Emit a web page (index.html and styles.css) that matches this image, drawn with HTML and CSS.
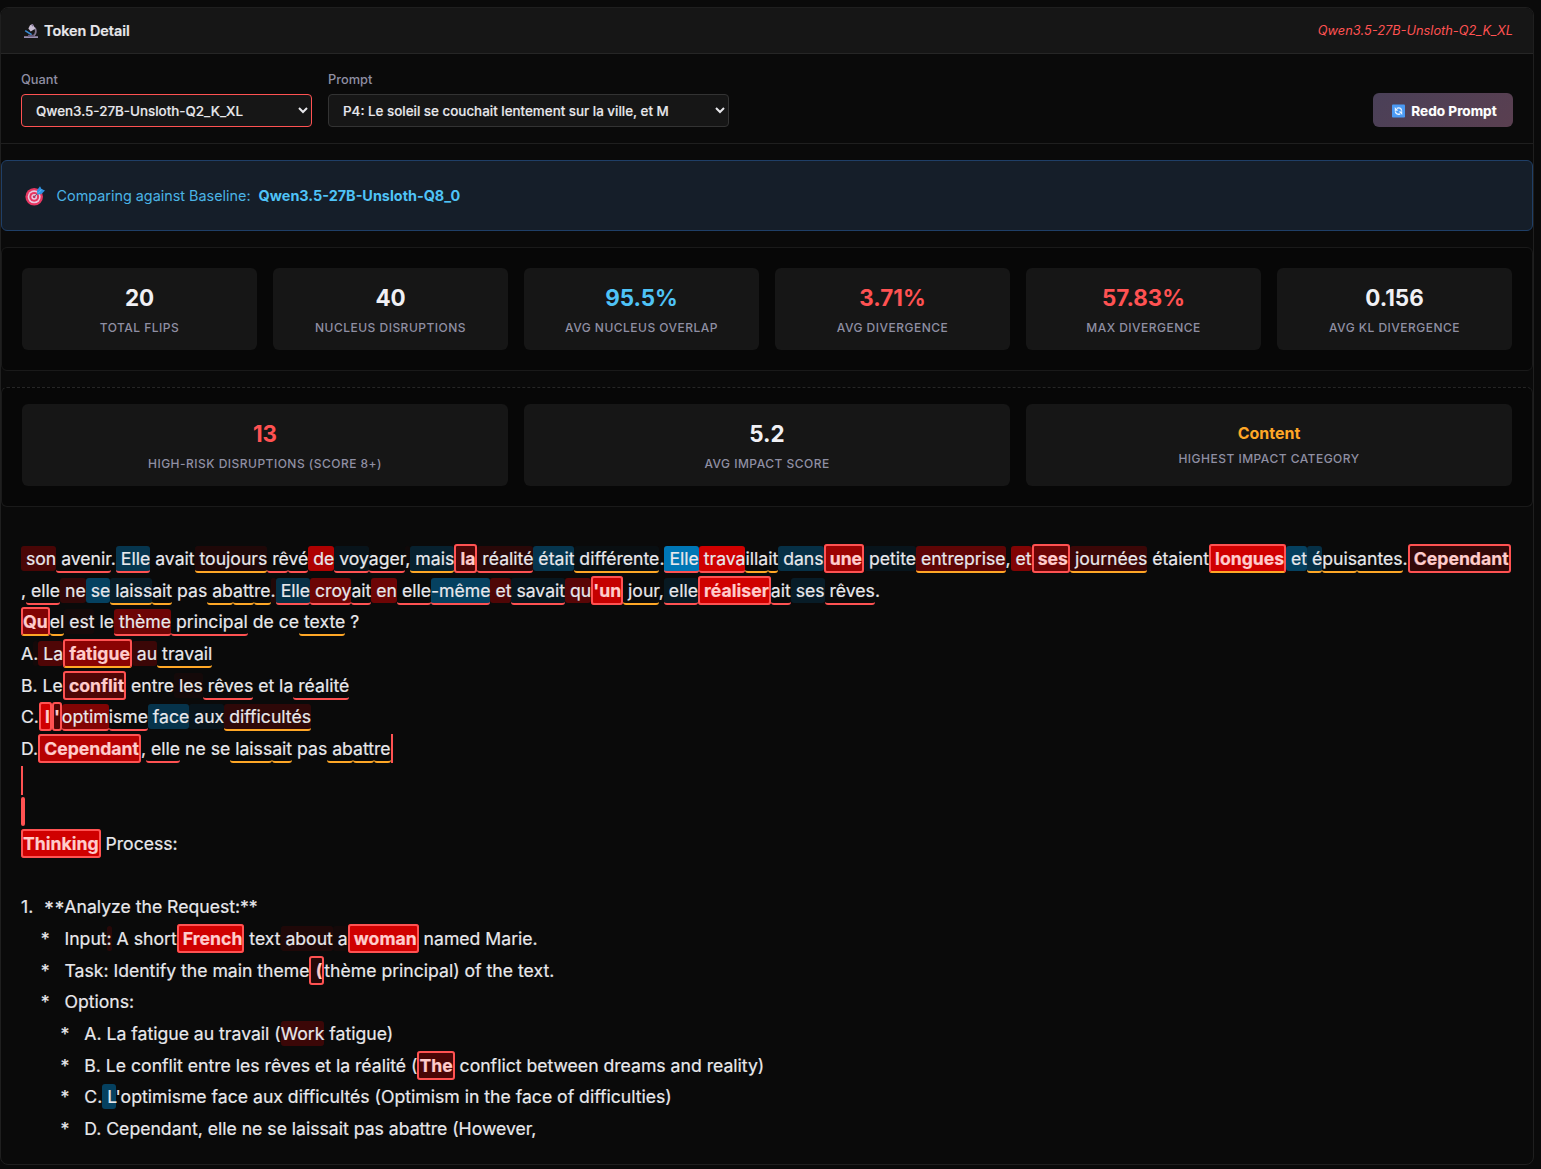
FILE: index.html
```html
<!DOCTYPE html>
<html lang="en">
<head>
<meta charset="utf-8">
<title>Token Detail</title>
<link rel="stylesheet" href="styles.css">
</head>
<body>
<main class="panel">
<header class="panel-header">
<h1 class="title"><svg class="icon-scope" viewBox="0 0 16 16"><path d="M1 13.3h14v1.7H1z" fill="#9a8fb0"/><path d="M10.5 4.2c3 1.3 3.600 6.300-.8 9.200" fill="none" stroke="#81758f" stroke-width="1.700"/><path d="M7 2.300 9.600 1l2.600 4.700-4.500 2.800-2.300-3z" fill="#c9bed4"/><path d="m8.300 1.800 1.600-.9 1 1.800-1.700.9z" fill="#817295"/><path d="m2.200 7.600 6.500 4.100" stroke="#398bd3" stroke-width="1.600"/><path d="M5 11.700h6v1.700H5z" fill="#665978"/></svg>Token Detail</h1>
<span class="model">Qwen3.5-27B-Unsloth-Q2_K_XL</span>
</header>
<section class="controls">
<label class="field">Quant<select class="select select-quant"><option>Qwen3.5-27B-Unsloth-Q2_K_XL</option></select></label>
<label class="field">Prompt<select class="select select-prompt"><option>P4: Le soleil se couchait lentement sur la ville, et M</option></select></label>
<button class="redo"><svg class="icon-redo" viewBox="0 0 14 14"><rect width="14" height="14" rx="1" fill="#4b9af3"/><path d="M5.200 4.100c2.400-1.300 5 .1 5.200 2.600M8.800 10c-2.400 1.300-5-.1-5.200-2.600" fill="none" stroke="#e8f3ff" stroke-width="1.500"/><path d="M3 2.800v4.100l3.800-.4zM11 11.300V7.200l-3.800.4z" fill="#e8f3ff"/></svg><span class="redo-text">Redo Prompt</span></button>
</section>
<section class="baseline">
<svg class="icon-target" viewBox="0 0 20 20"><circle cx="9.200" cy="10.800" r="8.800" fill="#e73762"/><circle cx="9.200" cy="10.800" r="6.500" fill="#eac8df"/><circle cx="9.200" cy="10.800" r="4.900" fill="#e73762"/><circle cx="9.200" cy="10.800" r="2.900" fill="#eac8df"/><circle cx="9.200" cy="10.800" r="1.400" fill="#c52c59"/><path d="m9.500 10.500 6-6" stroke="#68647e" stroke-width="1"/><path d="m12 4.200 3-4L16.500 3l3.500 1.500-3.800 3.700-3.900.3z" fill="#2d91e3"/><path d="m12.800 7.500 4-4" stroke="#65bef5" stroke-width="1"/></svg>
<span>Comparing against Baseline:</span><strong>Qwen3.5-27B-Unsloth-Q8_0</strong>
</section>
<section class="stats">
<div class="card"><div class="value">20</div><div class="label">Total Flips</div></div>
<div class="card"><div class="value">40</div><div class="label">Nucleus Disruptions</div></div>
<div class="card"><div class="value blue">95.5%</div><div class="label">Avg Nucleus Overlap</div></div>
<div class="card"><div class="value red">3.71%</div><div class="label">Avg Divergence</div></div>
<div class="card"><div class="value red">57.83%</div><div class="label">Max Divergence</div></div>
<div class="card"><div class="value">0.156</div><div class="label">Avg KL Divergence</div></div>
</section>
<section class="stats impact">
<div class="card"><div class="value red">13</div><div class="label">High-Risk Disruptions (Score 8+)</div></div>
<div class="card"><div class="value">5.2</div><div class="label">Avg Impact Score</div></div>
<div class="card"><div class="value category">Content</div><div class="label">Highest Impact Category</div></div>
</section>
<section class="tokens">
<div class="line"><span class="t r" style="--a:.32"> son</span><span class="t ur"> avenir</span>.<span class="t b ur" style="--a:.4"> Elle</span> avait<span class="t r uy" style="--a:.11"> toujours</span><span class="t ur"> rê</span><span class="t ur">vé</span><span class="t r" style="--a:.83"> de</span><span class="t b ur" style="--a:.1"> voy</span><span class="t ur">ager</span><span class="t r" style="--a:.03">,</span><span class="t b uy" style="--a:.22"> mais</span><span class="t r flip" style="--a:.32"> la</span><span class="t r ur" style="--a:.16"> réalité</span><span class="t b" style="--a:.4"> était</span><span class="t b uy" style="--a:.05"> différente</span>.<span class="t b ur" style="--a:1"> Elle</span><span class="t r ur" style="--a:1"> trava</span><span class="t uy">illa</span><span class="t uy">it</span><span class="t b" style="--a:.35"> dans</span><span class="t r flip" style="--a:.74"> une</span><span class="t b" style="--a:.1"> petite</span><span class="t r uy" style="--a:.43"> entreprise</span>,<span class="t r" style="--a:.6"> et</span><span class="t r flip" style="--a:.5"> ses</span><span class="t r uy" style="--a:.25"> journées</span> étaient<span class="t r flip uy" style="--a:1"> longues</span><span class="t b" style="--a:.5"> et</span><span class="t b uy" style="--a:.35"> é</span><span class="t uy">puis</span><span class="t uy">antes</span>.<span class="t r flip" style="--a:.2"> Cependant</span></div>
<div class="line">,<span class="t ur"> elle</span><span class="t r" style="--a:.2"> ne</span><span class="t b" style="--a:.5"> se</span><span class="t b uy" style="--a:.17"> laiss</span><span class="t uy">ait</span> pas<span class="t uy"> ab</span><span class="t uy">att</span><span class="t uy">re</span><span class="t r" style="--a:.12">.</span><span class="t b ur" style="--a:.35"> Elle</span><span class="t r ur" style="--a:.5"> croy</span><span class="t ur">ait</span><span class="t r" style="--a:.5"> en</span><span class="t ur"> elle</span><span class="t b ur" style="--a:.5">-même</span><span class="t r" style="--a:.35"> et</span><span class="t b ur" style="--a:.12"> savait</span><span class="t r" style="--a:.4"> qu</span><span class="t r flip" style="--a:.95">'un</span><span class="t uy"> jour</span>,<span class="t b ur" style="--a:.14"> elle</span><span class="t r flip" style="--a:1"> réaliser</span><span class="t ur">ait</span><span class="t b" style="--a:.17"> ses</span><span class="t ur"> rêves</span>.</div>
<div class="line"><span class="t r flip uy" style="--a:.6">Qu</span><span class="t uy">el</span><span class="t r" style="--a:.05"> est</span> le<span class="t r ur" style="--a:.5"> thème</span><span class="t ur"> principal</span> de ce<span class="t uy"> texte</span> ?</div>
<div class="line">A<span class="t r" style="--a:.05">.</span><span class="t r" style="--a:.35"> La</span><span class="t r flip uy" style="--a:.65"> fatigue</span><span class="t r" style="--a:.25"> au</span><span class="t uy"> travail</span></div>
<div class="line">B. Le<span class="t r flip" style="--a:.35"> conflit</span> entre<span class="t r" style="--a:.05"> les</span><span class="t ur"> rêves</span> et la<span class="t ur"> réalité</span></div>
<div class="line">C.<span class="t r flip" style="--a:1"> l</span><span class="t r flip" style="--a:.35">'</span><span class="t r ur" style="--a:.6">optim</span><span class="t ur">isme</span><span class="t b" style="--a:.38"> face</span><span class="t b" style="--a:.1"> aux</span><span class="t r uy" style="--a:.18"> difficultés</span></div>
<div class="line">D.<span class="t r flip" style="--a:.87"> Cependant</span>,<span class="t ur"> elle</span> ne se<span class="t uy"> laiss</span><span class="t uy">ait</span> pas<span class="t uy"> ab</span><span class="t uy">att</span><span class="t uy">re</span><span class="edge"></span></div>
<div class="line"><span class="edge"></span></div>
<div class="line"><span class="t flip"></span></div>
<div class="line"><span class="t r flip" style="--a:1">Thinking</span> Process:</div>
<div class="line"> </div>
<div class="line">1.  <span class="stars">**</span>Analyze the Request:**</div>
<div class="line">    *   Input<span class="t r" style="--a:.15">:</span> A short<span class="t r flip" style="--a:1"> French</span> text<span class="t r" style="--a:.11"> about</span><span class="t r" style="--a:.05"> a</span><span class="t r flip" style="--a:1"> woman</span> named Marie.</div>
<div class="line">    *   Task: Identify the main theme<span class="t r flip" style="--a:.15"> (</span>thème principal) of the text.</div>
<div class="line">    *   Options:</div>
<div class="line">        *   A. La fatigue au travail (<span class="t r" style="--a:.25">Work</span> fatigue)</div>
<div class="line">        *   B. Le conflit entre les rêves et la réalité (<span class="t r flip" style="--a:.32">The</span> conflict between dreams and reality)</div>
<div class="line">        *   C.<span class="t b" style="--a:.5"> L</span>'optimisme face aux difficultés (Optimism in the face of difficulties)</div>
<div class="line">        *   D. Cependant, elle ne se laissait pas abattre (However,</div>
</section>
</main>
</body>
</html>
```
FILE: styles.css
```css
* { box-sizing: border-box; }
html, body { height: 100%; }
body {
  margin: 0;
  padding: 7px 7px 0 0;
  background: #0a0a0a;
  color: #e8e8ec;
  font-family: Inter, "Liberation Sans", sans-serif;
  overflow: hidden;
}
.panel {
  height: 1158px;
  border: 1px solid #1f1f1f;
  border-radius: 8px;
  background: #0a0a0a;
  overflow: hidden;
}
.panel-header {
  display: flex;
  align-items: center;
  justify-content: space-between;
  height: 46px;
  padding: 0 20px;
  background: #161616;
  border-bottom: 1px solid #262626;
}
.title {
  display: flex;
  align-items: center;
  gap: 5px;
  margin: 0;
  padding-left: 2px;
  font-size: 14.4px;
  font-weight: 600;
  -webkit-text-stroke: .2px;
}
.icon-scope { width: 16px; height: 16px; }
.model { color: #ff5252; font-size: 12.8px; font-style: italic; }
.controls {
  display: flex;
  align-items: flex-end;
  gap: 16px;
  height: 90px;
  padding: 16px 20px;
  border-bottom: 1px solid #1f1f1f;
}
.field {
  display: flex;
  flex-direction: column;
  gap: 7px;
  color: #8f8fa3;
  font-size: 12.8px;
  font-weight: 500;
}
.select {
  height: 33px;
  padding: 1px 0 0 10px;
  border: 1px solid #333;
  border-radius: 4px;
  background: #161616;
  color: #e8e8ec;
  font: 500 13.4px Inter, "Liberation Sans", sans-serif;
  -webkit-text-stroke: .15px;
}
.select-quant { width: 291px; border-color: #ff5252; }
.select-prompt { width: 401px; }
.redo {
  display: flex;
  align-items: center;
  justify-content: center;
  gap: 6px;
  width: 140px;
  height: 34px;
  margin-left: auto;
  padding: 1px 0 0 3px;
  border: 0;
  border-radius: 6px;
  background: linear-gradient(135deg, #4a4058, #5a3f50);
  color: #fff;
  font: 700 13.6px Inter, "Liberation Sans", sans-serif;
}
.redo-text { padding-top: 1px; -webkit-text-stroke: .15px; }
.icon-redo { width: 13px; height: 14px; }
.baseline {
  display: flex;
  align-items: center;
  height: 71px;
  margin-top: 16px;
  padding: 0 23px;
  border: 1px solid #1f3f67;
  border-radius: 6px;
  background: #151e29;
  color: #4ab3e5;
  font-size: 14.4px;
}
.baseline strong { margin-left: 8px; color: #4fc3f7; font-weight: 700; }
.icon-target { width: 20px; height: 20px; margin-right: 11.5px; }
.stats {
  display: grid;
  grid-template-columns: repeat(6, 1fr);
  gap: 16px;
  margin-top: 16px;
  padding: 20px;
  border: 1px solid #1a1a1a;
  border-radius: 6px;
  background: #070707;
}
.impact {
  grid-template-columns: repeat(3, 1fr);
  padding-top: 16px;
  border-top-style: dashed;
  border-top-color: #262626;
}
.card {
  height: 82px;
  padding: 16px 12px 0;
  border-radius: 6px;
  background: #161616;
  text-align: center;
}
.value { font-size: 22.4px; line-height: 28px; font-weight: 700; color: #f0f0f4; }
.label {
  margin-top: 8px;
  color: #8f8fa3;
  font-size: 12px;
  line-height: 16px;
  font-weight: 500;
  letter-spacing: .48px;
  text-transform: uppercase;
}
.blue { color: #4fc3f7; }
.red { color: #ff5252; }
.category { color: #ffa726; font-size: 16px; line-height: 27px; }
.category + .label { margin-top: 4px; }
.tokens { padding: 36px 20px 20px; font-size: 17.61px; -webkit-text-stroke: .2px; }
.line { height: 31.68px; line-height: 31.68px; white-space: pre; }
.t { padding: 2px 0; border-radius: 3px; }
.r { background: rgba(208, 0, 0, var(--a)); }
.b { background: rgba(0, 119, 182, var(--a)); }
.ur { border-bottom: 2px solid #ff5252; }
.uy { border-bottom: 2px solid #ffa726; }
.flip { border: 2px solid #ff5252; color: #ffcccc; font-weight: 700; }
.flip.uy { border-bottom-color: #ffa726; }
.edge { padding: 4px 0; border-left: 2px solid #ff5252; }
.stars {
  display: inline-block;
  width: 21.2px;
  height: 30px;
  padding: 2px 0 0 1px;
  font-size: 19px;
  letter-spacing: 1.2px;
  vertical-align: top;
}
```
